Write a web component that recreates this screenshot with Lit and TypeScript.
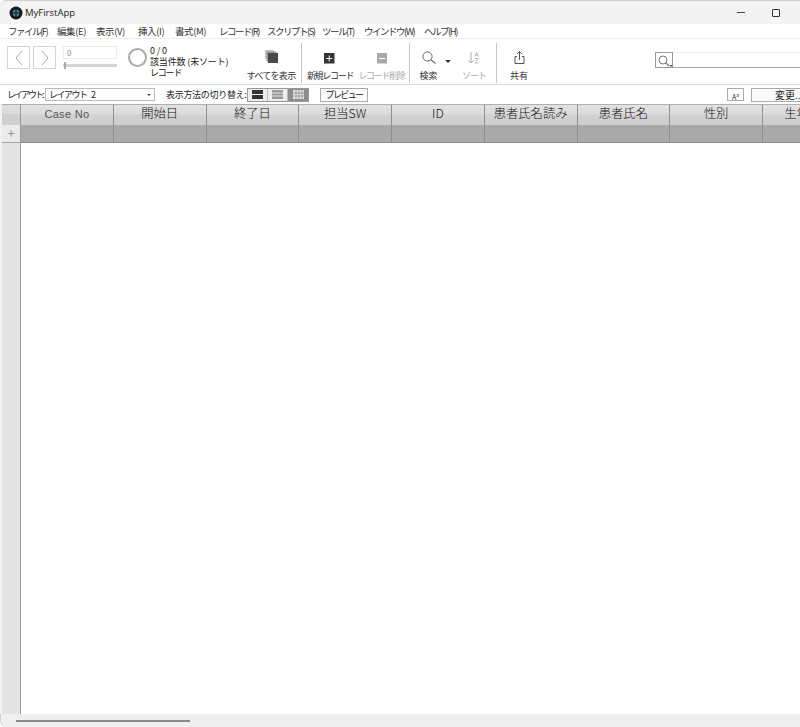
import { LitElement, css, html, svg } from 'lit';
import { customElement } from 'lit/decorators.js';

// kana items get tighter tracking, the reference font has narrow kana
const menus = [
    { label: 'ファイル(F)', kana: true, width: 49 },
    { label: '編集(E)', kana: false, width: 39 },
    { label: '表示(V)', kana: false, width: 42 },
    { label: '挿入(I)', kana: false, width: 37 },
    { label: '書式(M)', kana: false, width: 44 },
    { label: 'レコード(R)', kana: true, width: 48 },
    { label: 'スクリプト(S)', kana: true, width: 55 },
    { label: 'ツール(T)', kana: true, width: 42 },
    { label: 'ウインドウ(W)', kana: true, width: 60 },
    { label: 'ヘルプ(H)', kana: true, width: 50 },
];
const columns = ['Case No', '開始日', '終了日', '担当SW', 'ID', '患者氏名読み', '患者氏名', '性別', '生年月日'];

@customElement('app-root')
export class AppRoot extends LitElement
{
    private icon(w: number, h: number, body: unknown)
    {
        return html`<svg width=${w} height=${h} viewBox="0 0 ${w} ${h}">${body}</svg>`;
    }

    private tool(label: string, cls: string, body: unknown)
    {
        return html`
<div class="tool ${cls}">
    <div class="tool-icon">${this.icon(20, 20, body)}</div>
    <span>${label}</span>
</div>`;
    }

    protected render(): unknown
    {
        return html`
<div class="title">
    ${this.icon(14, 14, svg`
        <circle cx="7" cy="7" r="6.5" fill="#10181f"/>
        <circle cx="7" cy="7" r="3.6" fill="#4b7f96"/>
        <path d="M7 3v8M3 7h8" stroke="#10181f" stroke-width="1"/>`)}
    <span class="app-name">MyFirstApp</span>
    <div class="win-buttons">
        <span class="min"></span>
        <span class="max"></span>
    </div>
</div>
<div class="menu">
    ${menus.map(m => html`<span class=${m.kana ? 'kana' : ''} style="width:${m.width}px">${m.label}</span>`)}
</div>
<div class="toolbar">
    <div class="pager">
        <button class="nav">${this.icon(10, 16, svg`<path d="M8 1 2 8l6 7" fill="none" stroke="#a8a8a8" stroke-width="1"/>`)}</button>
        <button class="nav">${this.icon(10, 16, svg`<path d="M2 1l6 7-6 7" fill="none" stroke="#a8a8a8" stroke-width="1"/>`)}</button>
    </div>
    <div class="slider-box">
        <div class="record">0</div>
        <div class="slider"><i></i></div>
    </div>
    <div class="ring"></div>
    <div class="count">
        <span>0 / 0</span>
        <span>該当件数 (未ソート)</span>
        <span class="tight">レコード</span>
    </div>
    ${this.tool('すべてを表示', 'all', svg`
        <rect x="4" y="3" width="9" height="9" fill="#c4c4c4"/>
        <rect x="5.500" y="4.500" width="10" height="10" fill="#9a9a9a"/>
        <rect x="7" y="6" width="10" height="10" fill="#4a4a4a"/>`)}
    <div class="sep s1"></div>
    ${this.tool('新規レコード', 'new', svg`
        <rect x="4" y="6" width="10.500" height="10.500" fill="#333"/>
        <path d="M9.250 8.500v6M6.250 11.500h6" stroke="#fff" stroke-width="1"/>`)}
    ${this.tool('レコード削除', 'del dim', svg`
        <rect x="5" y="6" width="10" height="10.500" fill="#a9a9a9"/>
        <path d="M7 11.500h6" stroke="#fff" stroke-width="1"/>`)}
    <div class="sep s2"></div>
    <div class="find">
        ${this.tool('検索', 'search-tool', svg`
            <circle cx="8.500" cy="9.500" r="4.600" fill="none" stroke="#666" stroke-width="1"/>
            <path d="M11.800 12.800 16.500 16.500" stroke="#666" stroke-width="1.100"/>`)}
        <i class="caret"></i>
    </div>
    ${this.tool('ソート', 'sort dim', svg`
        <path d="M7 5v11M4.500 13.500 7 16l2.500-2.500" fill="none" stroke="#aaa" stroke-width="1"/>
        <path d="M11 9.500l1.700-4 1.700 4M11.600 8h2.200M11 11.500h3.400L11 16h3.400" fill="none" stroke="#aaa" stroke-width=".8"/>`)}
    <div class="sep"></div>
    ${this.tool('共有', 'share', svg`
        <path d="M8 9.500H6v7h9v-7h-2M10.500 13V4.500M8 7l2.500-2.500L13 7" fill="none" stroke="#555" stroke-width="1"/>`)}
    <div class="search">
        <div class="search-icon">${this.icon(16, 14, svg`
            <circle cx="6" cy="6" r="4" fill="none" stroke="#777" stroke-width="1"/>
            <path d="M9 9l3 3" stroke="#777" stroke-width="1.200"/>
            <path d="M12.500 11h3l-1.500 2z" fill="#444"/>`)}</div>
        <div class="search-input"></div>
    </div>
</div>
<div class="layoutbar">
    <span class="lbl first">レイアウト:</span>
    <div class="select"><span>レイアウト 2</span><i class="caret small"></i></div>
    <span class="lbl view">表示方法の切り替え:</span>
    <div class="views">
        <span class="view-btn">${this.icon(13, 9, svg`<path d="M1 0h11v4H1zM1 5h11v4H1z" fill="#333"/>`)}</span>
        <span class="view-btn">${this.icon(13, 9, svg`<path d="M1 0h11v9H1z" fill="#999"/><path d="M1 3h11M1 6h11" stroke="#ddd"/>`)}</span>
        <span class="view-btn on">${this.icon(13, 9, svg`<path d="M1 0h11v9H1z" fill="#e6e6e6"/><path d="M1 3h11M1 6h11M4 0v9M7 0v9M10 0v9" stroke="#777" stroke-width=".6"/>`)}</span>
    </div>
    <button class="flat preview">プレビュー</button>
    <button class="flat aa">A<small>a</small></button>
    <button class="flat change">変更...</button>
</div>
<div class="body">
    <div class="gutter">
        <div class="g-head"></div>
        <div class="g-plus">+</div>
    </div>
    <div class="grid">
        <div class="cols heads">
            ${columns.map(c => html`<div class="head">${c}</div>`)}
        </div>
        <div class="cols">
            ${columns.map(() => html`<div class="cell"></div>`)}
        </div>
    </div>
</div>
<div class="bottom"><div class="thumb"></div></div>`;
    }

    static get styles()
    {
        return css`
:host {
    display: flex;
    flex-direction: column;
    width: 800px;
    height: 727px;
    overflow: hidden;
    background: #fff;
    font-family: "Noto Sans CJK JP", "Liberation Sans", sans-serif;
    font-size: 9px;
    color: #333;
}

button {
    padding: 0;
    margin: 0;
    font: inherit;
    color: inherit;
}

.title {
    display: flex;
    align-items: center;
    flex: none;
    height: 23px;
    padding-left: 9px;
    background: #f3f3f3;
    border-top: 1px solid #cfcfcf;
    border-radius: 6px 0 0 0;
}

.app-name {
    margin-left: 2px;
    font-family: "Open Sans", sans-serif;
    font-size: 9.500px;
    color: #222;
}

.win-buttons {
    display: flex;
    align-items: center;
    gap: 27px;
    margin-left: auto;
    padding-right: 20px;
}

.min {
    width: 8px;
    height: 1px;
    background: #444;
}

.max {
    box-sizing: border-box;
    width: 8px;
    height: 8px;
    border: 1px solid #333;
    border-radius: 1px;
}

.menu {
    display: flex;
    flex: none;
    align-items: center;
    height: 15px;
    padding-left: 8px;
    box-sizing: border-box;
    border-bottom: 1px solid #eee;
    letter-spacing: -0.4px;
    font-size: 9.500px;
}

.menu span {
    flex: none;
    white-space: nowrap;
}

.menu .kana {
    letter-spacing: -1.500px;
}

.toolbar {
    display: flex;
    flex: none;
    align-items: flex-start;
    height: 46px;
    box-sizing: border-box;
    border-bottom: 1px solid #dcdcdc;
    padding-left: 7px;
}

.pager {
    display: flex;
    flex: none;
    gap: 3px;
    margin-top: 7px;
}

.nav {
    display: flex;
    align-items: center;
    justify-content: center;
    box-sizing: border-box;
    width: 23px;
    height: 23px;
    background: #fff;
    border: 1px solid #d4d4d4;
}

.slider-box {
    flex: none;
    width: 54px;
    margin: 7px 0 0 7px;
}

.record {
    box-sizing: border-box;
    height: 13px;
    padding-left: 3px;
    line-height: 11px;
    font-size: 8px;
    color: #888;
    border: 1px solid #ececec;
}

.slider {
    position: relative;
    height: 3px;
    margin-top: 5px;
    background: #d5d5d5;
}

.slider i {
    position: absolute;
    left: 1px;
    top: -2px;
    width: 2px;
    height: 7px;
    background: #aaa;
}

.ring {
    flex: none;
    box-sizing: border-box;
    width: 19px;
    height: 19px;
    margin: 9px 0 0 11px;
    border: 2px solid #aaa;
    border-radius: 50%;
}

.count {
    display: flex;
    flex: none;
    flex-direction: column;
    width: 94px;
    margin: 6px 0 0 3px;
    line-height: 11px;
    font-size: 9px;
    letter-spacing: -0.150px;
    color: #222;
}

.count .tight {
    letter-spacing: -1.200px;
}

.tool {
    display: flex;
    flex: none;
    flex-direction: column;
    align-items: center;
    white-space: nowrap;
    line-height: 11px;
    font-size: 9px;
    letter-spacing: -0.600px;
    color: #333;
}

.tool-icon {
    height: 20px;
    margin-top: 8px;
    margin-bottom: 3px;
}

.tool svg {
    display: block;
}

.all {
    width: 54px;
}

.new {
    width: 56px;
    letter-spacing: -1.300px;
}

.del {
    width: 47px;
    letter-spacing: -1.300px;
}

.search-tool {
    width: 37px;
    letter-spacing: 0;
}

.sort {
    width: 44px;
    margin-left: 5px;
    letter-spacing: -1px;
}

.share {
    width: 44px;
    letter-spacing: 0;
}

.dim {
    color: #aaa;
}

.sep {
    flex: none;
    width: 1px;
    margin-top: 4px;
    height: 40px;
    background: #c8c8c8;
}

.sep.s1 {
    margin-left: 3px;
}

.sep.s2 {
    margin-left: 4px;
}

.find {
    position: relative;
    display: flex;
    flex: none;
}

.caret {
    position: absolute;
    left: 35px;
    top: 21px;
    width: 0;
    height: 0;
    border: 3px solid transparent;
    border-top: 3px solid #333;
}

.caret.small {
    position: static;
    margin: 3px 3px 0 auto;
    border-width: 2.500px;
    border-top-color: #444;
}

.search {
    display: flex;
    flex: none;
    align-items: stretch;
    width: 200px;
    height: 16px;
    margin: 13px 0 0 114px;
}

.search-icon {
    flex: none;
    box-sizing: border-box;
    width: 18px;
    padding: 1px 0 0 1px;
    border: 1px solid #999;
}

.search-icon svg {
    display: block;
}

.search-input {
    flex: 1;
    border-top: 1px solid #eee;
    border-bottom: 1px solid #aaa;
}

.layoutbar {
    display: flex;
    flex: none;
    align-items: center;
    height: 19px;
    padding-left: 7px;
    font-size: 9px;
    letter-spacing: -0.3px;
    color: #222;
}

.lbl {
    flex: none;
    white-space: nowrap;
}

.lbl.first {
    width: 38px;
    letter-spacing: -2px;
}

.select {
    display: flex;
    flex: none;
    align-items: center;
    box-sizing: border-box;
    width: 110px;
    height: 13px;
    padding-left: 3px;
    border: 1px solid #bbb;
    letter-spacing: -1.500px;
    word-spacing: 4px;
}

.lbl.view {
    width: 80px;
    margin-left: 11px;
}

.views {
    display: flex;
    flex: none;
    margin-left: 1px;
    border: 1px solid #999;
}

.view-btn {
    display: flex;
    align-items: center;
    justify-content: center;
    box-sizing: border-box;
    width: 20px;
    height: 12px;
    background: #ededed;
    border-right: 1px solid #bbb;
}

.view-btn svg {
    display: block;
}

.view-btn.on {
    background: #8d8d8d;
    border-right: none;
}

.flat {
    box-sizing: border-box;
    height: 14px;
    background: #fafafa;
    border: 1px solid #aaa;
    line-height: 12px;
    white-space: nowrap;
}

.preview {
    flex: none;
    width: 48px;
    margin-left: 11px;
    letter-spacing: -1.600px;
}

.aa {
    flex: none;
    width: 17px;
    height: 13px;
    margin-left: auto;
    font-size: 7px;
    letter-spacing: 0;
    background: #fff;
}

.aa small {
    font-size: 5px;
    vertical-align: super;
}

.change {
    flex: none;
    width: 60px;
    margin-left: 7px;
    margin-right: -11px;
    text-align: left;
    padding-left: 23px;
    font-size: 10px;
}

.body {
    display: flex;
    flex: 1;
    min-height: 0;
}

.gutter {
    flex: none;
    box-sizing: border-box;
    width: 21px;
    background: #e4e4e4;
    border-left: 2px solid #f2f2f2;
    border-right: 1px solid #9a9a9a;
}

.g-head {
    height: 21px;
    background: linear-gradient(#e0e0e0, #dadada 45%, #cfcfcf 46%, #d0d0d0);
    border-top: 1px solid #b0b0b0;
    box-sizing: border-box;
}

.g-plus {
    box-sizing: border-box;
    height: 18px;
    text-align: center;
    line-height: 16px;
    font-size: 13px;
    color: #999;
    background: #ebebeb;
    border-bottom: 1px solid #a5a5a5;
}

.grid {
    flex: 1;
    min-width: 0;
    overflow: hidden;
}

.cols {
    display: grid;
    grid-template-columns: repeat(9, 92.750px);
    height: 18px;
    box-sizing: border-box;
    background: #a9a9a9;
    border-bottom: 1px solid #8e8e8e;
}

.cols.heads {
    height: 21px;
    background: linear-gradient(#e2e2e2, #dcdcdc 45%, #d2d2d2 50%, #cdcdcd);
    border-top: 1px solid #b0b0b0;
    border-bottom: none;
}

.head {
    box-sizing: border-box;
    white-space: nowrap;
    text-align: center;
    line-height: 16px;
    font-size: 12.300px;
    font-weight: 300;
    color: #111;
    border-right: 1px solid #8f8f8f;
}

.head:first-child {
    font-family: "Liberation Sans", sans-serif;
    font-size: 11px;
    font-weight: 400;
    line-height: 18px;
    letter-spacing: 0.300px;
    color: #555;
}

.cell {
    border-right: 1px solid #8f8f8f;
}

.bottom {
    flex: none;
    height: 13px;
    background: #efefef;
    border-radius: 0 0 0 6px;
    border-left: 1px solid #cfcfcf;
    box-sizing: border-box;
}

.thumb {
    width: 174px;
    height: 2px;
    margin: 6px 0 0 15px;
    background: #8a8a8a;
}
        `;
    }
}
